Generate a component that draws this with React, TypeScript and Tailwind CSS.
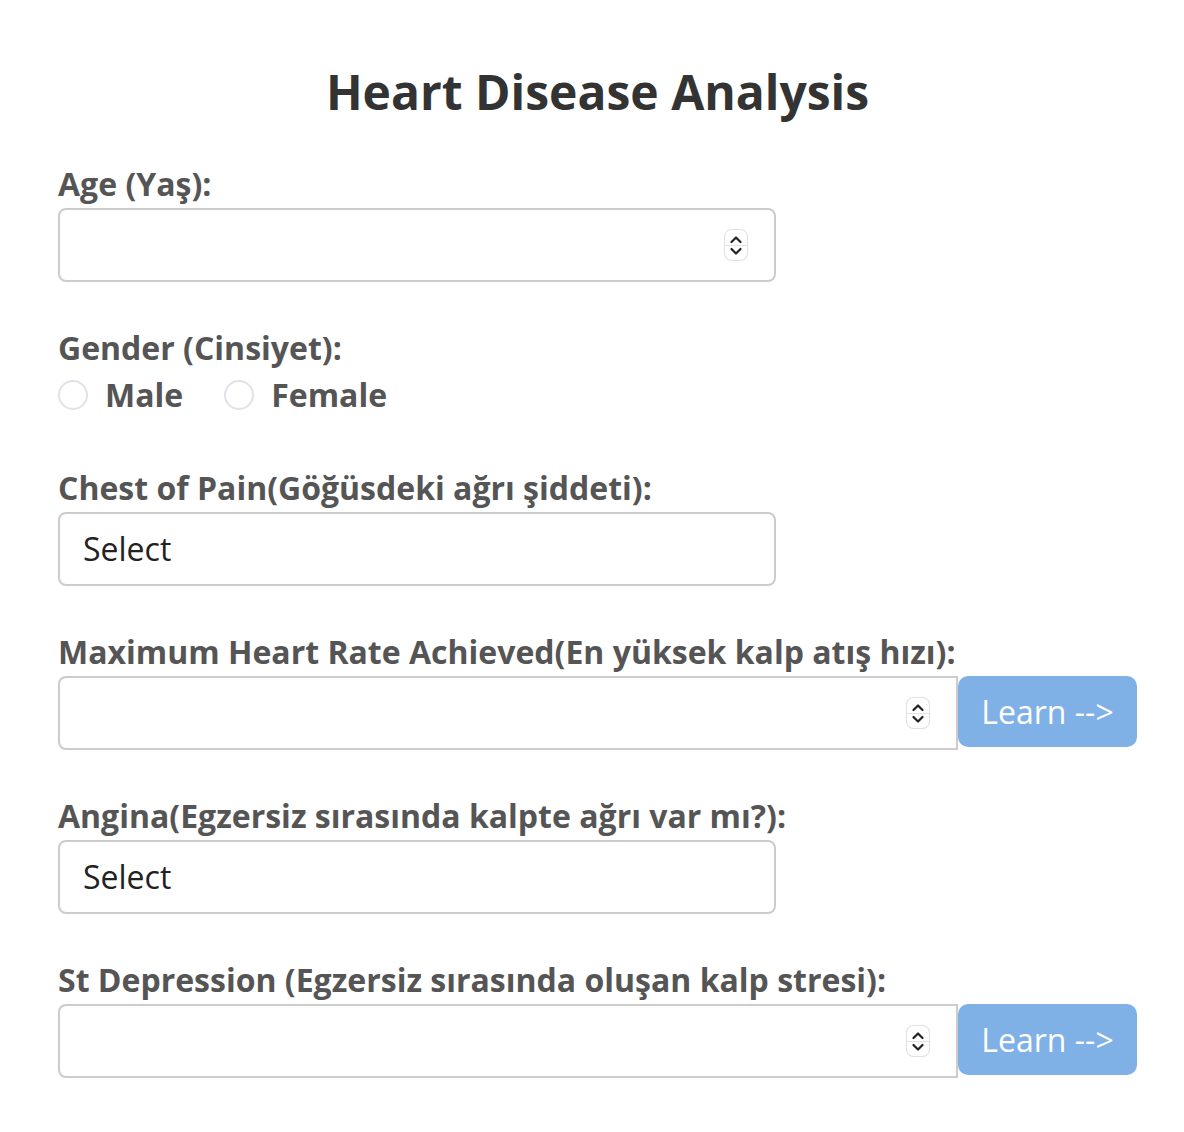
import React from "react";

const font = { fontFamily: '"Open Sans", "Noto Sans", sans-serif' };

function Spinner() {
  return (
    <div className="pointer-events-none absolute right-[26px] top-1/2 flex h-[32px] w-[24px] -translate-y-1/2 flex-col items-center justify-center rounded-[8px] border border-[#e2e2e2] bg-white shadow-[0_0_1px_rgba(0,0,0,0.1)]">
      <svg width="12" height="9" viewBox="0 0 12 9" className="mb-[1px]">
        <path d="M1.5 7 L6 2.5 L10.5 7" fill="none" stroke="#222" strokeWidth="2.2" strokeLinecap="round" strokeLinejoin="round" />
      </svg>
      <div className="h-px w-full bg-[#e4e4e4]" />
      <svg width="12" height="9" viewBox="0 0 12 9" className="mt-[1px]">
        <path d="M1.5 2 L6 6.5 L10.5 2" fill="none" stroke="#222" strokeWidth="2.2" strokeLinecap="round" strokeLinejoin="round" />
      </svg>
    </div>
  );
}

function Label({ children }: { children: React.ReactNode }) {
  return (
    <div className="whitespace-nowrap text-[32px] font-bold leading-[44px] text-[#555555]" style={font}>
      {children}
    </div>
  );
}

function NumberInput() {
  return (
    <div className="relative mt-[2px] h-[74px] w-[718px] rounded-[8px] border-2 border-[#cccccc] bg-white">
      <input type="text" className="h-full w-full rounded-[8px] bg-transparent px-[24px] outline-none" />
      <Spinner />
    </div>
  );
}

function SelectBox() {
  return (
    <div className="mt-[2px] flex h-[74px] w-[718px] items-center rounded-[8px] border-2 border-[#cccccc] bg-white pl-[23px]">
      <span className="text-[32px] leading-none text-[#222222]" style={font}>
        Select
      </span>
    </div>
  );
}

function LearnInput() {
  return (
    <div className="mt-[2px] flex items-start">
      <div className="relative h-[74px] w-[900px] rounded-l-[8px] border-2 border-[#cccccc] bg-white">
        <input type="text" className="h-full w-full bg-transparent px-[24px] outline-none" />
        <Spinner />
      </div>
      <button
        className="flex h-[71px] w-[179px] items-center justify-center rounded-[10px] bg-[#7fb0e6] text-[32px] text-white"
        style={font}
      >
        Learn --&gt;
      </button>
    </div>
  );
}

function Radio({ label }: { label: string }) {
  return (
    <div className="flex items-center">
      <div className="h-[30px] w-[30px] rounded-full border-2 border-[#dfe2e6] bg-white" />
      <span className="ml-[17px] text-[32px] font-bold leading-[44px] text-[#555555]" style={font}>
        {label}
      </span>
    </div>
  );
}

export default function App() {
  return (
    <div className="h-[1132px] w-full overflow-hidden bg-white" style={font}>
      <div className="ml-[58px] w-[1079px] pt-[60px]">
        <h1 className="text-center text-[48px] font-bold leading-[64px] text-[#333333]">Heart Disease Analysis</h1>

        <div className="mt-[38px]">
          <Label>Age (Yaş):</Label>
          <NumberInput />
        </div>

        <div className="mt-[44px]">
          <Label>Gender (Cinsiyet):</Label>
          <div className="mt-[3px] flex items-center gap-[41px]">
            <Radio label="Male" />
            <Radio label="Female" />
          </div>
        </div>

        <div className="mt-[49px]">
          <Label>Chest of Pain(Göğüsdeki ağrı şiddeti):</Label>
          <SelectBox />
        </div>

        <div className="mt-[44px]">
          <Label>Maximum Heart Rate Achieved(En yüksek kalp atış hızı):</Label>
          <LearnInput />
        </div>

        <div className="mt-[44px]">
          <Label>Angina(Egzersiz sırasında kalpte ağrı var mı?):</Label>
          <SelectBox />
        </div>

        <div className="mt-[44px]">
          <Label>St Depression (Egzersiz sırasında oluşan kalp stresi):</Label>
          <LearnInput />
        </div>

        <div className="mt-[45px]">
          <Label>Slope of Peak (Egzersiz sırasında kalp hızındaki eğim):</Label>
          <SelectBox />
        </div>
      </div>
    </div>
  );
}
